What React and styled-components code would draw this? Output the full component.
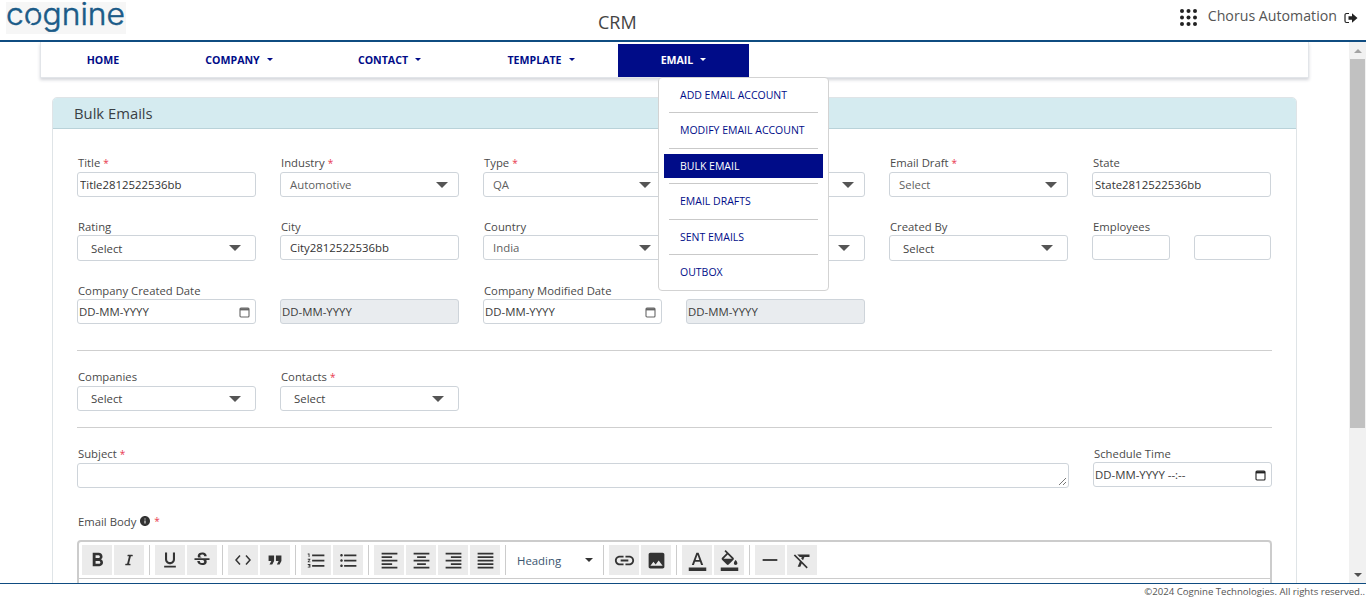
import React from "react";
import styled, { createGlobalStyle } from "styled-components";
import { FaItalic } from "react-icons/fa";
import {
  MdFormatBold,
  MdFormatUnderlined,
  MdStrikethroughS,
  MdFormatQuote,
  MdFormatListNumbered,
  MdFormatListBulleted,
  MdFormatAlignLeft,
  MdFormatAlignCenter,
  MdFormatAlignRight,
  MdFormatAlignJustify,
  MdInsertLink,
  MdImage,
  MdFormatColorText,
  MdFormatColorFill,
  MdHorizontalRule,
  MdFormatClear,
  MdInfo,
} from "react-icons/md";

const NAVY = "#000c88";
const FONT = '"Open Sans", "Noto Sans", sans-serif';

const GlobalStyle = createGlobalStyle`
  html, body { margin: 0; padding: 0; height: 100%; overflow: hidden; background: #fff; }
  body { font-family: ${FONT}; font-size: 11.4px; color: #444; }
  * { box-sizing: border-box; }
`;

const Page = styled.div`
  height: 599px;
  display: flex;
  flex-direction: column;
`;

const Header = styled.header`
  flex: 0 0 42px;
  display: grid;
  grid-template-columns: 598px auto 1fr;
  align-items: start;
  border-bottom: 2px solid #0f4c81;
`;

const LogoArt = styled.svg`
  display: block;
  margin: 2px 0 0 6px;
  background: #f6f6f6;
  overflow: visible;
`;

const AppTitle = styled.div`
  margin-top: 11px;
  font-size: 18px;
  line-height: 22px;
  color: #444;
`;

const UserBox = styled.div`
  justify-self: end;
  display: flex;
  align-items: center;
  margin: 6px 8px 0 0;
  color: #555;
  font-size: 14.2px;
  line-height: 20px;
`;

const Middle = styled.div`
  flex: 1;
  min-height: 0;
  display: flex;
`;

const Content = styled.main`
  flex: 1;
  min-width: 0;
  overflow: hidden;
`;

const Scrollbar = styled.div`
  flex: 0 0 17px;
  display: flex;
  flex-direction: column;
  align-items: center;
  background: #f1f1f1;
`;

const ScrollArrow = styled.div`
  flex: 0 0 17px;
  display: flex;
  align-items: center;
  justify-content: center;
  &::after {
    content: "";
    border-left: 4px solid transparent;
    border-right: 4px solid transparent;
    ${(p) => (p.$down ? "border-top: 4px solid #505050;" : "border-bottom: 4px solid #a3a3a3;")}
  }
`;

const ScrollThumb = styled.div`
  flex: 0 0 369px;
  width: 15px;
  background: #c1c1c1;
`;

const ScrollRest = styled.div`
  flex: 1;
`;

const Nav = styled.nav`
  position: relative;
  margin-left: 40px;
  width: 1269px;
  height: 36px;
  display: flex;
  padding: 2px 0 0 2px;
  background: #fff;
  border: 1px solid #e2e5e9;
  border-top: 0;
  box-shadow: 0 2px 3px rgba(60, 70, 90, 0.22);
`;

const NavItem = styled.div`
  width: ${(p) => p.$w}px;
  height: 33px;
  padding-bottom: 2px;
  display: flex;
  align-items: center;
  justify-content: center;
  font-weight: 700;
  font-size: 10.6px;
  color: ${(p) => (p.$active ? "#fff" : NAVY)};
  background: ${(p) => (p.$active ? NAVY : "transparent")};
`;

const Caret = styled.span`
  margin-left: 7px;
  border-left: 3.5px solid transparent;
  border-right: 3.5px solid transparent;
  border-top: 3.5px solid currentColor;
`;

const Menu = styled.div`
  position: absolute;
  z-index: 5;
  left: 617px;
  top: 35px;
  width: 171px;
  height: 214px;
  padding: 5px 5px 0;
  background: #fff;
  border: 1px solid #d3d3d3;
  border-radius: 4px;
`;

const MenuItem = styled.div`
  height: 24px;
  padding: 0 0 1px 16px;
  display: flex;
  align-items: center;
  font-size: 10.5px;
  color: ${(p) => (p.$active ? "#fff" : NAVY)};
  background: ${(p) => (p.$active ? NAVY : "transparent")};
`;

const MenuRule = styled.div`
  height: 1px;
  margin: 5.25px 5px;
  background: #c9c9c9;
`;

const Card = styled.section`
  margin: 19px 0 0 52px;
  width: 1245px;
  border: 1px solid #dfe4e7;
  border-radius: 5px 5px 0 0;
`;

const CardHead = styled.div`
  height: 31px;
  padding-left: 21px;
  display: flex;
  align-items: center;
  background: #d5ebf0;
  border-bottom: 1px solid #b9d2d9;
  border-radius: 4px 4px 0 0;
  font-size: 14.8px;
  color: #3a3f45;
`;

const CardBody = styled.div`
  padding: 26px 24px 0;
`;

const FieldGrid = styled.div`
  display: grid;
  grid-template-columns: repeat(6, 179px);
  column-gap: 24px;
  row-gap: 21px;
  align-items: start;
`;

const Field = styled.div`
  min-width: 0;
  grid-column: span ${(p) => p.$span || 1};
  ${(p) => p.$nudge && "margin: 0 -1px 0 1px;"}
`;

const Label = styled.div`
  height: 17px;
  padding: ${(p) => (p.$low ? 1 : 0)}px 0 0 1px;
  line-height: 15px;
  font-size: 11.3px;
  color: #4a4a4a;
  white-space: nowrap;
`;

const Req = styled.span`
  color: #e8384f;
  margin-left: 3px;
  font-size: 10px;
`;

const TextBox = styled.input`
  display: block;
  width: 100%;
  height: 25px;
  padding: 0 0 0 ${(p) => p.$pad || 2}px;
  border: 1px solid #ced4da;
  border-radius: 3px;
  font: 11.4px ${FONT};
  color: #333;
  outline: none;
`;

const SelectBox = styled.div`
  height: ${(p) => (p.$soft || p.$short ? 25 : 26)}px;
  padding: 0 ${(p) => (p.$soft ? 10 : 14)}px 0 ${(p) => (p.$soft ? 9 : 13)}px;
  display: flex;
  align-items: center;
  border: 1px solid #ced4da;
  border-radius: 3px;
  background: #fff;
  color: ${(p) => (p.$soft ? "#5f5f5f" : "#444")};
  &::after {
    content: "";
    margin-left: auto;
    border-left: 6px solid transparent;
    border-right: 6px solid transparent;
    border-top: 6.5px solid #555;
  }
`;

const DateBox = styled.div`
  height: 25px;
  padding: 0 5px 0 1px;
  display: flex;
  align-items: center;
  justify-content: space-between;
  border: 1px solid #ced4da;
  border-radius: 3px;
  color: #3c3c3c;
  background: ${(p) => (p.$off ? "#e9ecef" : "#fff")};
`;

const PairRow = styled.div`
  display: grid;
  grid-template-columns: 78px 77px;
  column-gap: 24px;
`;

const Rule = styled.hr`
  margin: ${(p) => p.$top}px 0 ${(p) => p.$bottom}px;
  width: 1195px;
  border: 0;
  border-top: 1px solid #cfcfcf;
`;

const SubjectBox = styled.div`
  position: relative;
  margin: 1px -1px 0 0;
  height: 25px;
  border: 1px solid #ced4da;
  border-radius: 3px;
`;

const Grip = styled.svg`
  position: absolute;
  right: 1px;
  bottom: 1px;
`;

const BodyLabel = styled(Label)`
  margin: 24px 0 10px;
  display: flex;
  align-items: center;
  height: 18px;
  svg { margin-left: 3px; color: #333; }
`;

const Editor = styled.div`
  width: 1195px;
  height: 60px;
  border: 2px solid #ccc;
  border-radius: 4px;
`;

const Toolbar = styled.div`
  display: flex;
  padding: 3px;
  border-bottom: 1px solid #ccc;
  height: 37px;
`;

const ToolGroup = styled.div`
  display: flex;
  gap: 2px;
`;

const ToolButton = styled.div`
  width: 30px;
  height: 30px;
  display: flex;
  align-items: center;
  justify-content: center;
  background: #ebebeb;
  color: #333;
`;

const ToolSep = styled.div`
  width: 1px;
  height: 30px;
  margin: 0 5px;
  background: #ccc;
`;

const HeadingPick = styled.div`
  width: 87px;
  height: 30px;
  padding: 0 5px 0 6px;
  display: flex;
  align-items: center;
  justify-content: space-between;
  font-size: 11.4px;
  color: #3a5570;
  &::after {
    content: "";
    border-left: 4.5px solid transparent;
    border-right: 4.5px solid transparent;
    border-top: 4.5px solid #333;
  }
`;

const Footer = styled.footer`
  flex: 0 0 16px;
  border-top: 1px solid #0f4c81;
  padding-right: 1px;
  text-align: right;
  font-size: 9.6px;
  line-height: 15px;
  color: #555;
  white-space: nowrap;
`;

const Logo = () => (
  <LogoArt width="120" height="32" viewBox="0 0 120 32">
    <text
      x="0"
      y="22.5"
      fontFamily="Inter, sans-serif"
      fontWeight="300"
      fontSize="31"
      fill="#1b5b88"
      stroke="#1b5b88"
      strokeWidth="0.5"
      textLength="119"
      lengthAdjust="spacingAndGlyphs"
    >
      cognine
    </text>
    <path d="M33 10l4-4M27 19l-4 4" stroke="#f6f6f6" strokeWidth="1.6" />
  </LogoArt>
);

const AppsIcon = () => (
  <svg width="17" height="17" viewBox="0 0 17 17" style={{ marginRight: 11, marginTop: 3 }}>
    {[2, 8.5, 15].map((y) =>
      [2, 8.5, 15].map((x) => <circle key={`${x}-${y}`} cx={x} cy={y} r="2" fill="#222" />)
    )}
  </svg>
);

const LogoutIcon = () => (
  <svg width="14" height="12" viewBox="0 0 14 12" style={{ marginLeft: 7, marginTop: 3 }}>
    <path d="M5 1.5H2.5A1.5 1.5 0 0 0 1 3v6a1.5 1.5 0 0 0 1.5 1.5H5" fill="none" stroke="#222" strokeWidth="1.2" />
    <path d="M4.5 4.2H8V1.2L13.5 6 8 10.8V7.8H4.5z" fill="#222" />
  </svg>
);

const CalendarIcon = ({ dark }) => (
  <svg width="11" height="12" viewBox="0 0 11 12">
    <rect x="1" y="2" width="9" height="9" rx="1" fill="none" stroke={dark ? "#222" : "#666"} strokeWidth="1.1" />
    <path d="M1 2.2h9v2.2H1z" fill={dark ? "#222" : "#666"} />
  </svg>
);

const CodeIcon = () => (
  <svg width="16" height="10" viewBox="0 0 16 10" fill="none" stroke="#333" strokeWidth="1.5">
    <path d="M5 .5 1 5l4 4.5M11 .5 15 5l-4 4.5" />
  </svg>
);

const navItems = [
  { label: "HOME", w: 120 },
  { label: "COMPANY", w: 152, caret: true },
  { label: "CONTACT", w: 149, caret: true },
  { label: "TEMPLATE", w: 154, caret: true },
  { label: "EMAIL", w: 131, caret: true, active: true },
];

const menuItems = ["ADD EMAIL ACCOUNT", "MODIFY EMAIL ACCOUNT", "BULK EMAIL", "EMAIL DRAFTS", "SENT EMAILS", "OUTBOX"];

const toolGroups = [
  [<MdFormatBold size={23} />, <FaItalic size={12} />],
  [<MdFormatUnderlined size={20} />, <MdStrikethroughS size={20} />],
  [<CodeIcon />, <MdFormatQuote size={22} />],
  [<MdFormatListNumbered size={21} />, <MdFormatListBulleted size={21} />],
  [
    <MdFormatAlignLeft size={21} />,
    <MdFormatAlignCenter size={21} />,
    <MdFormatAlignRight size={21} />,
    <MdFormatAlignJustify size={21} />,
  ],
  "heading",
  [<MdInsertLink size={23} />, <MdImage size={21} />],
  [<MdFormatColorText size={21} />, <MdFormatColorFill size={21} />],
  [<MdHorizontalRule size={22} />, <MdFormatClear size={21} />],
];

const Required = ({ children }) => (
  <>
    {children}
    <Req>*</Req>
  </>
);

const App = () => (
  <Page>
    <GlobalStyle />
    <Header>
      <Logo />
      <AppTitle>CRM</AppTitle>
      <UserBox>
        <AppsIcon />
        Chorus Automation
        <LogoutIcon />
      </UserBox>
    </Header>

    <Middle>
      <Content>
        <Nav>
          {navItems.map((item) => (
            <NavItem key={item.label} $w={item.w} $active={item.active}>
              {item.label}
              {item.caret && <Caret />}
            </NavItem>
          ))}
          <Menu>
            {menuItems.map((label, i) => (
              <React.Fragment key={label}>
                {i > 0 && <MenuRule />}
                <MenuItem $active={label === "BULK EMAIL"}>{label}</MenuItem>
              </React.Fragment>
            ))}
          </Menu>
        </Nav>

        <Card>
          <CardHead>Bulk Emails</CardHead>
          <CardBody>
            <FieldGrid>
              <Field>
                <Label><Required>Title</Required></Label>
                <TextBox readOnly value="Title2812522536bb" />
              </Field>
              <Field>
                <Label><Required>Industry</Required></Label>
                <SelectBox $soft>Automotive</SelectBox>
              </Field>
              <Field>
                <Label><Required>Type</Required></Label>
                <SelectBox $soft>QA</SelectBox>
              </Field>
              <Field>
                <Label />
                <SelectBox $soft />
              </Field>
              <Field>
                <Label><Required>Email Draft</Required></Label>
                <SelectBox $soft>Select</SelectBox>
              </Field>
              <Field>
                <Label>State</Label>
                <TextBox readOnly value="State2812522536bb" />
              </Field>

              <Field>
                <Label $low>Rating</Label>
                <SelectBox>Select</SelectBox>
              </Field>
              <Field>
                <Label $low>City</Label>
                <TextBox readOnly $pad={9} value="City2812522536bb" />
              </Field>
              <Field>
                <Label $low>Country</Label>
                <SelectBox $soft>India</SelectBox>
              </Field>
              <Field>
                <Label />
                <SelectBox />
              </Field>
              <Field>
                <Label $low>Created By</Label>
                <SelectBox>Select</SelectBox>
              </Field>
              <Field>
                <Label $low>Employees</Label>
                <PairRow>
                  <TextBox readOnly />
                  <TextBox readOnly />
                </PairRow>
              </Field>

              <Field>
                <Label $low>Company Created Date</Label>
                <DateBox>DD-MM-YYYY<CalendarIcon /></DateBox>
              </Field>
              <Field>
                <Label />
                <DateBox $off>DD-MM-YYYY</DateBox>
              </Field>
              <Field>
                <Label $low>Company Modified Date</Label>
                <DateBox>DD-MM-YYYY<CalendarIcon /></DateBox>
              </Field>
              <Field>
                <Label />
                <DateBox $off>DD-MM-YYYY</DateBox>
              </Field>
            </FieldGrid>

            <Rule $top={26} $bottom={18} />

            <FieldGrid>
              <Field>
                <Label>Companies</Label>
                <SelectBox $short>Select</SelectBox>
              </Field>
              <Field>
                <Label><Required>Contacts</Required></Label>
                <SelectBox $short>Select</SelectBox>
              </Field>
            </FieldGrid>

            <Rule $top={16} $bottom={17} />

            <FieldGrid>
              <Field $span={5}>
                <Label $low><Required>Subject</Required></Label>
                <SubjectBox>
                  <Grip width="9" height="9" viewBox="0 0 9 9" stroke="#666" strokeWidth="0.9">
                    <path d="M1 8 8 1M5 8l3-3" />
                  </Grip>
                </SubjectBox>
              </Field>
              <Field $nudge>
                <Label $low>Schedule Time</Label>
                <DateBox>DD-MM-YYYY --:--<CalendarIcon dark /></DateBox>
              </Field>
            </FieldGrid>

            <BodyLabel>
              Email Body
              <MdInfo size={12} />
              <Req>*</Req>
            </BodyLabel>
            <Editor>
              <Toolbar>
                {toolGroups.map((group, i) => (
                  <React.Fragment key={i}>
                    {i > 0 && <ToolSep />}
                    {group === "heading" ? (
                      <HeadingPick>Heading</HeadingPick>
                    ) : (
                      <ToolGroup>
                        {group.map((icon, j) => (
                          <ToolButton key={j}>{icon}</ToolButton>
                        ))}
                      </ToolGroup>
                    )}
                  </React.Fragment>
                ))}
              </Toolbar>
            </Editor>
          </CardBody>
        </Card>
      </Content>
      <Scrollbar>
        <ScrollArrow />
        <ScrollThumb />
        <ScrollRest />
        <ScrollArrow $down />
      </Scrollbar>
    </Middle>

    <Footer>©2024 Cognine Technologies. All rights reserved..</Footer>
  </Page>
);

export default App;
